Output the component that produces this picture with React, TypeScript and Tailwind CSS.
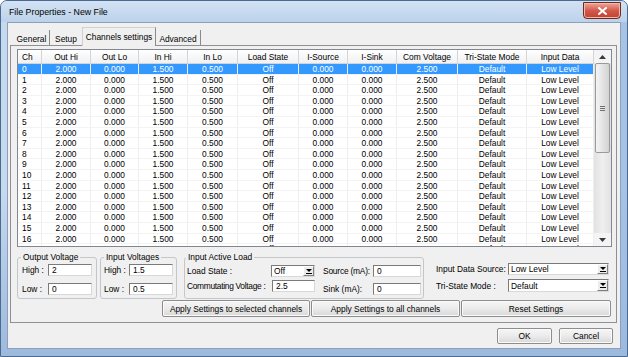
import React from 'react';

const ROWS = Array.from({ length: 18 }, (_, i) => i);

function Arrow({ up }: { up?: boolean }) {
  return (
    <svg width="7" height="4" viewBox="0 0 7 4">
      <path d={up ? 'M0 4h7L3.5 0z' : 'M0 0h7L3.5 4z'} fill="#3a3a3a" />
    </svg>
  );
}

function DropBtn() {
  return (
    <div className="flex w-[11px] items-center justify-center border border-t-white border-l-white border-r-[#808080] border-b-[#808080] bg-[#ececec]">
      <svg width="6" height="5" viewBox="0 0 6 5">
        <path d="M0 0h6L3 3z" fill="#000" />
        <rect x="0" y="4" width="6" height="1" fill="#000" />
      </svg>
    </div>
  );
}

function Sel({ text, className }: { text: string; className: string }) {
  return (
    <div
      className={`flex shrink-0 bg-white border border-t-[#7a7a7a] border-l-[#7a7a7a] border-r-[#d8d8d8] border-b-[#d8d8d8] ${className}`}
    >
      <span className="flex flex-1 items-center pl-[2px]">{text}</span>
      <DropBtn />
    </div>
  );
}

function Box({ v, className }: { v: string; className: string }) {
  return (
    <div
      className={`flex h-[12px] shrink-0 items-center bg-white border border-t-[#7a7a7a] border-l-[#7a7a7a] border-r-[#d8d8d8] border-b-[#d8d8d8] pl-[3px] ${className}`}
    >
      {v}
    </div>
  );
}

function Btn({ children, className }: { children: React.ReactNode; className: string }) {
  return (
    <div
      className={`flex items-center justify-center rounded-[2px] border border-[#8d8d8d] bg-gradient-to-b from-[#f6f6f6] via-[#ebebeb] to-[#d8d8d8] shadow-[inset_0_0_0_1px_#fafafa] ${className}`}
    >
      {children}
    </div>
  );
}

const HEAD = ['Ch', 'Out Hi', 'Out Lo', 'In Hi', 'In Lo', 'Load State', 'I-Source', 'I-Sink', 'Com Voltage', 'Tri-State Mode', 'Input Data'];

function rowData(i: number) {
  return [String(i), '2.000', '0.000', '1.500', '0.500', 'Off', '0.000', '0.000', '2.500', 'Default', 'Low Level'];
}

export default function App() {
  return (
    <div className="font-['Liberation_Sans',Arial,sans-serif] text-[8.4px] leading-[10px] text-black">
      <div className="flex h-[357px] w-[628px] flex-col overflow-hidden rounded-t-[7px] border border-[#4a6a92] bg-gradient-to-r from-[#c6d9ee] via-[#bed3eb] to-[#a7c2e3]">
        {/* Title bar */}
        <div className="flex h-[21px] shrink-0 items-start bg-gradient-to-b from-[#d3e2f3] to-[#bcd2ea]">
          <div className="flex h-[21px] flex-1 items-center pl-[8px] text-[8.8px]">File Properties - New File</div>
          <div className="mr-[6px] mt-[1px] flex h-[17px] w-[38px] items-center justify-center rounded-b-[4px] border border-[#6e2b22] bg-gradient-to-b from-[#e9a899] via-[#d4584b] to-[#c2402f] shadow-[inset_0_0_0_1px_#f2b8a8]">
            <svg width="9" height="8" viewBox="0 0 9 8">
              <path d="M1 1l7 6M8 1L1 7" stroke="#fff" strokeWidth="2" strokeLinecap="square" />
            </svg>
          </div>
        </div>

        <div className="flex flex-1 bg-gradient-to-b from-transparent via-transparent to-[#9db9dc]">
          <div className="w-[6px]" />
          {/* Client */}
          <div className="flex h-[327px] w-[614px] flex-col border border-[#8aa0bd] bg-[#f0f0f0]">
            {/* Tabs */}
            <div className="flex h-[22px] shrink-0 items-end pl-[6px]">
              <div className="flex h-[15px] w-[36px] items-center justify-center border-r border-[#8a8a8a] pt-[3px]">General</div>
              <div className="flex h-[15px] w-[32px] items-center justify-center pt-[3px]">Setup</div>
              <div className="relative z-10 -mb-[1px] flex h-[19px] w-[74px] items-center justify-center border-l border-t border-r border-l-[#d0d0d0] border-t-[#d0d0d0] border-r-[#8a8a8a] bg-[#f0f0f0] pb-[1px]">
                Channels settings
              </div>
              <div className="flex h-[15px] w-[45px] items-center justify-center border-r border-[#8a8a8a] pt-[3px]">Advanced</div>
            </div>

            {/* Tab panel */}
            <div className="ml-[2px] flex h-[278px] w-[607px] flex-col border border-[#8e9095] bg-[#f0f0f0] pl-[6px] pr-[4px] pt-[3px]">
              {/* List */}
              <div className="flex h-[198px] shrink-0 border border-[#828790] bg-white">
                <div className="w-[576px] overflow-hidden">
                  <div className="grid h-[14px] grid-cols-[24px_49px_48px_49px_50px_61px_49px_49px_61px_69px_67px] border-b border-[#d5d5d5] bg-gradient-to-b from-white to-[#f0f1f3]">
                    {HEAD.map((h, i) => (
                      <div
                        key={h}
                        className={`flex items-center border-r border-[#d5d5d5] ${i === 0 ? 'pl-[4px]' : 'justify-center'}`}
                      >
                        {h}
                      </div>
                    ))}
                  </div>
                  {ROWS.map((r) => (
                    <div
                      key={r}
                      className={`grid h-[10.6px] grid-cols-[24px_49px_48px_49px_50px_61px_49px_49px_61px_69px_67px] border-b border-[#f3f3f3] ${r === 0 ? 'text-white' : ''}`}
                    >
                      {rowData(r).map((c, i) => (
                        <div
                          key={i}
                          className={`flex items-center border-r border-[#eeeeee] leading-[10px] ${i === 0 ? 'pl-[4px]' : 'justify-center'} ${r === 0 ? 'bg-[#3399ff]' : ''}`}
                        >
                          {c}
                        </div>
                      ))}
                    </div>
                  ))}
                </div>
                {/* Scrollbar */}
                <div className="flex w-[17px] flex-col bg-gradient-to-r from-[#e2e2e2] via-[#efefef] to-[#e2e2e2]">
                  <div className="flex h-[13px] items-center justify-center bg-[#f4f4f4]">
                    <Arrow up />
                  </div>
                  <div className="flex-1 px-[1px]">
                    <div className="flex h-[90px] flex-col items-center justify-center gap-[1px] rounded-[2px] border border-[#9a9a9a] bg-gradient-to-r from-[#f4f4f4] via-[#e4e4e4] to-[#d2d2d2]">
                      <div className="h-[1px] w-[5px] bg-[#6f6f6f]" />
                      <div className="h-[1px] w-[5px] bg-[#6f6f6f]" />
                      <div className="h-[1px] w-[5px] bg-[#6f6f6f]" />
                    </div>
                  </div>
                  <div className="flex h-[13px] items-center justify-center bg-[#f4f4f4]">
                    <Arrow />
                  </div>
                </div>
              </div>

              {/* Groups row */}
              <div className="mt-[5px] flex h-[47px] shrink-0 items-start whitespace-nowrap">
                <fieldset className="h-[47px] w-[80px] rounded-[3px] border border-[#c3c7cc] px-[4px]">
                  <legend className="-ml-[1px] px-[2px] leading-[10px]">Output Voltage</legend>
                  <div className="mt-[2px] flex items-center">
                    <span className="w-[26px]">High :</span>
                    <Box v="2" className="w-[44px]" />
                  </div>
                  <div className="mt-[7px] flex items-center">
                    <span className="w-[26px]">Low :</span>
                    <Box v="0" className="w-[44px]" />
                  </div>
                </fieldset>
                <fieldset className="ml-[3px] h-[47px] w-[77px] rounded-[3px] border border-[#c3c7cc] px-[3px]">
                  <legend className="px-[2px] leading-[10px]">Input Voltages</legend>
                  <div className="mt-[2px] flex items-center">
                    <span className="w-[25px]">High :</span>
                    <Box v="1.5" className="w-[44px]" />
                  </div>
                  <div className="mt-[7px] flex items-center">
                    <span className="w-[25px]">Low :</span>
                    <Box v="0.5" className="w-[44px]" />
                  </div>
                </fieldset>
                <fieldset className="ml-[7px] h-[47px] w-[240px] rounded-[3px] border border-[#c3c7cc] px-[2px]">
                  <legend className="-ml-[1px] px-[2px] leading-[10px]">Input Active Load</legend>
                  <div className="mt-[3px] flex items-center">
                    <span className="w-[84px]">Load State :</span>
                    <Sel text="Off" className="h-[12px] w-[44px]" />
                    <span className="ml-[8px] w-[50px] tracking-[-0.2px]">Source (mA):</span>
                    <Box v="0" className="w-[48px]" />
                  </div>
                  <div className="mt-[3px] flex items-start">
                    <div className="flex items-center">
                      <span className="w-[85px] tracking-[-0.3px]">Commutating Voltage :</span>
                      <Box v="2.5" className="w-[43px]" />
                    </div>
                    <div className="ml-[8px] mt-[3px] flex items-center">
                      <span className="w-[50px]">Sink (mA):</span>
                      <Box v="0" className="w-[48px]" />
                    </div>
                  </div>
                </fieldset>
                <div className="ml-[12px] mt-[11px] flex flex-col">
                  <div className="flex items-center">
                    <span className="w-[72px]">Input Data Source:</span>
                    <Sel text="Low Level" className="h-[12px] w-[101px]" />
                  </div>
                  <div className="mt-[4px] flex items-center">
                    <span className="w-[72px]">Tri-State Mode :</span>
                    <Sel text="Default" className="h-[13px] w-[101px]" />
                  </div>
                </div>
              </div>

              {/* Apply buttons */}
              <div className="mt-[1px] flex justify-end pr-[1px]">
                <Btn className="h-[17px] w-[148px]">Apply Settings to selected channels</Btn>
                <Btn className="ml-[1px] h-[17px] w-[149px]">Apply Settings to all channels</Btn>
                <Btn className="ml-[1px] h-[17px] w-[150px]">Reset Settings</Btn>
              </div>
            </div>

            {/* OK / Cancel */}
            <div className="mt-[5px] flex justify-end pr-[7px]">
              <Btn className="h-[16px] w-[55px]">OK</Btn>
              <Btn className="ml-[7px] h-[16px] w-[54px]">Cancel</Btn>
            </div>
          </div>
          <div className="w-[6px]" />
        </div>
      </div>
    </div>
  );
}
